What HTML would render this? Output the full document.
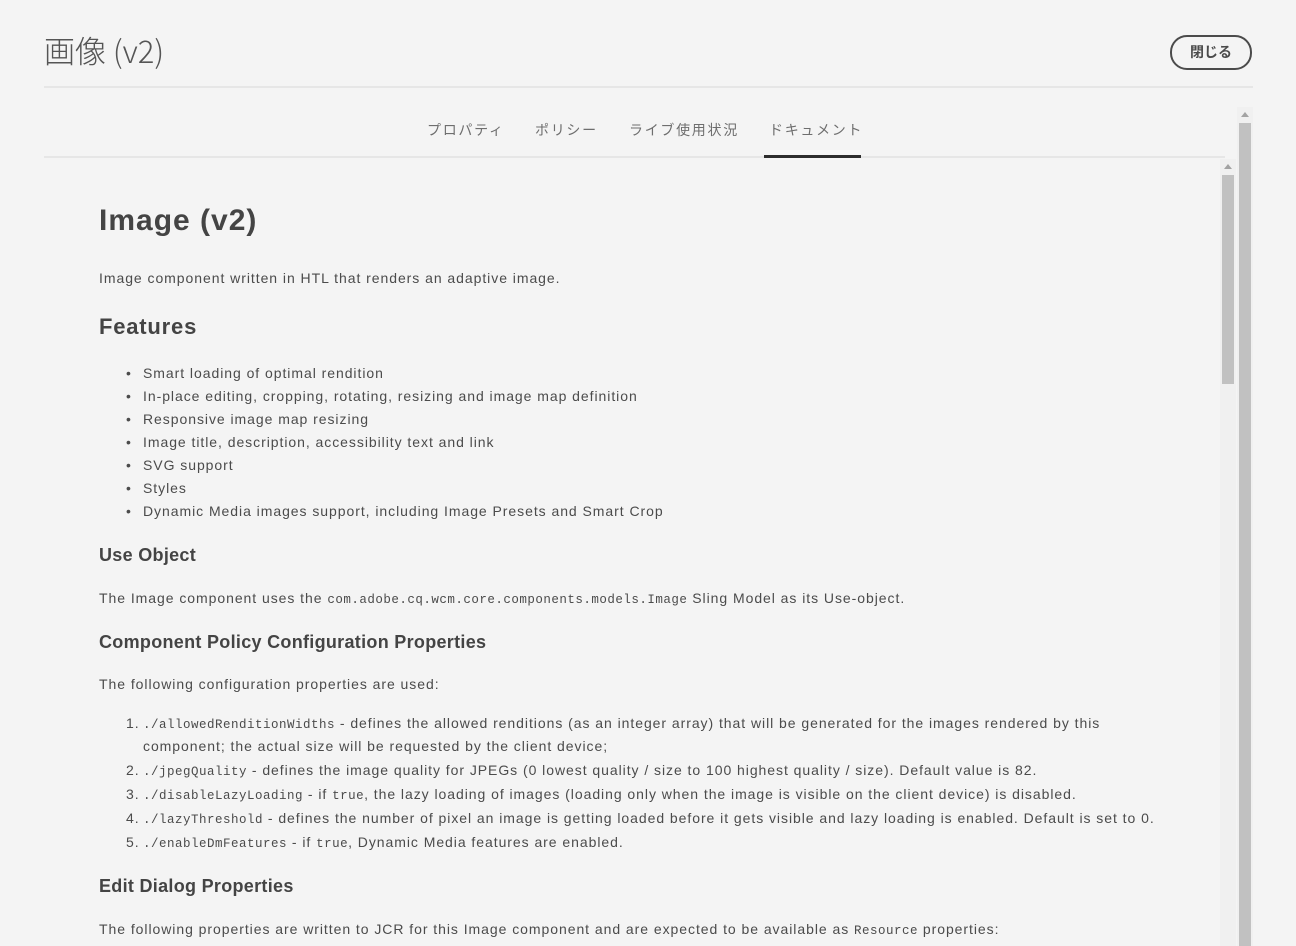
<!DOCTYPE html>
<html><head><meta charset="utf-8"><style>
body{margin:0;background:#f4f4f4;color:#4b4b4b;font-family:"Liberation Sans","Noto Sans CJK JP",sans-serif;width:1296px;height:946px;overflow:hidden;position:relative}
.title{position:absolute;left:44px;top:30px;font-size:31px;color:#555;font-family:"Noto Sans CJK JP","Liberation Sans",sans-serif;font-weight:300;line-height:40px}
.close{position:absolute;left:1170px;top:35px;width:78px;height:31px;border:2px solid #4b4b4b;border-radius:17px;font-size:14px;font-weight:bold;text-align:center;line-height:31px;color:#4b4b4b;font-family:"Noto Sans CJK JP",sans-serif}
.hr1{position:absolute;left:44px;top:86px;width:1209px;height:2px;background:#e6e6e6}
.tabs{position:absolute;top:120px;left:0;font-size:14px;color:#6e6e6e;font-family:"Noto Sans CJK JP",sans-serif;letter-spacing:1.7px}
.tabs span{position:absolute;white-space:nowrap}
.hr2{position:absolute;left:44px;top:156px;width:1181px;height:2px;background:#e6e6e6}
.ul{position:absolute;left:764px;top:155px;width:97px;height:3px;background:#2c2c2c}
.sb1{position:absolute;left:1237px;top:107px;width:16px;height:839px;background:#f0f0f0}
.sb1 i{position:absolute;left:2px;top:16px;width:12px;height:823px;background:#c1c1c1}
.sb2{position:absolute;left:1220px;top:159px;width:16px;height:787px;background:#f0f0f0}
.sb2 i{position:absolute;left:2px;top:16px;width:12px;height:209px;background:#c1c1c1}
.arr{position:absolute;left:4px;top:5px;width:0;height:0;border-left:4px solid transparent;border-right:4px solid transparent;border-bottom:5px solid #a3a3a3}
.c{position:absolute;left:99px;top:0;width:1080px;font-size:14px;letter-spacing:.95px}
.c>*{position:absolute;left:0;margin:0;white-space:nowrap}
h1{font-size:30px;letter-spacing:1px;font-weight:bold;color:#444}
h2{font-size:22px;letter-spacing:.8px;color:#444}
h3{font-size:18px;letter-spacing:.3px;color:#444}
code{font-family:"Liberation Mono",monospace;font-size:12.5px;letter-spacing:.5px}
.li,.ol{padding-left:44px}
.li b,.ol b{position:absolute;left:27px;font-weight:normal}
</style></head><body>
<div class="title">画像 (v2)</div>
<div class="close">閉じる</div>
<div class="hr1"></div>
<div class="tabs"><span style="left:427px">プロパティ</span><span style="left:535px">ポリシー</span><span style="left:629px">ライブ使用状況</span><span style="left:769px">ドキュメント</span></div>
<div class="hr2"></div><div class="ul"></div>
<div class="sb1"><span class="arr"></span><i></i></div>
<div class="sb2"><span class="arr"></span><i></i></div>
<div class="c">
<h1 style="top:204px">Image (v2)</h1>
<p style="top:270px">Image component written in HTL that renders an adaptive image.</p>
<h2 style="top:314px">Features</h2>
<p class="li" style="top:365px"><b>•</b>Smart loading of optimal rendition</p>
<p class="li" style="top:388px"><b>•</b>In-place editing, cropping, rotating, resizing and image map definition</p>
<p class="li" style="top:411px"><b>•</b>Responsive image map resizing</p>
<p class="li" style="top:434px"><b>•</b>Image title, description, accessibility text and link</p>
<p class="li" style="top:457px"><b>•</b>SVG support</p>
<p class="li" style="top:480px"><b>•</b>Styles</p>
<p class="li" style="top:503px"><b>•</b>Dynamic Media images support, including Image Presets and Smart Crop</p>
<h3 style="top:545px">Use Object</h3>
<p style="top:590px">The Image component uses the <code>com.adobe.cq.wcm.core.components.models.Image</code> Sling Model as its Use-object.</p>
<h3 style="top:632px">Component Policy Configuration Properties</h3>
<p style="top:676px">The following configuration properties are used:</p>
<p class="ol" style="top:715px"><b>1.</b><code>./allowedRenditionWidths</code> - defines the allowed renditions (as an integer array) that will be generated for the images rendered by this</p>
<p class="ol" style="top:738px">component; the actual size will be requested by the client device;</p>
<p class="ol" style="top:762px"><b>2.</b><code>./jpegQuality</code> - defines the image quality for JPEGs (0 lowest quality / size to 100 highest quality / size). Default value is 82.</p>
<p class="ol" style="top:786px"><b>3.</b><code>./disableLazyLoading</code> - if <code>true</code>, the lazy loading of images (loading only when the image is visible on the client device) is disabled.</p>
<p class="ol" style="top:810px"><b>4.</b><code>./lazyThreshold</code> - defines the number of pixel an image is getting loaded before it gets visible and lazy loading is enabled. Default is set to 0.</p>
<p class="ol" style="top:834px"><b>5.</b><code>./enableDmFeatures</code> - if <code>true</code>, Dynamic Media features are enabled.</p>
<h3 style="top:876px">Edit Dialog Properties</h3>
<p style="top:921px">The following properties are written to JCR for this Image component and are expected to be available as <code>Resource</code> properties:</p>
</div>
</body></html>
